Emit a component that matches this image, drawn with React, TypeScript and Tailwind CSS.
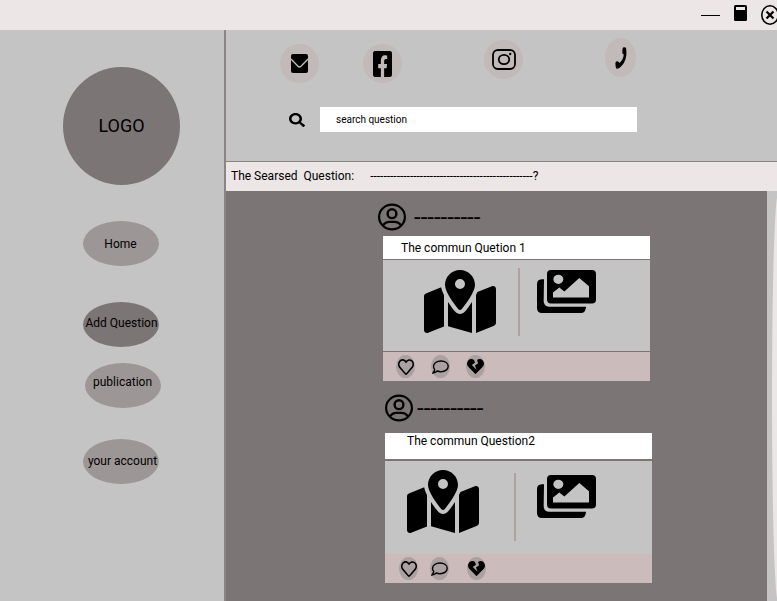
import type { ReactNode } from "react";
import { FaHeartBroken, FaRegHeart, FaSearch, FaFacebookSquare } from "react-icons/fa";
import { FaMapLocationDot } from "react-icons/fa6";

function MailIcon() {
  return (
    <svg viewBox="0 0 17 19" className="h-[19px] w-[17px]" aria-hidden="true">
      <rect width="17" height="19" rx="2" fill="#000" />
      <path d="M0 5 L7 12.2 Q8.500 13.600 10 12.200 L17 5" fill="none" stroke="#c2b9b9" strokeWidth="1.400" />
    </svg>
  );
}

function InstagramIcon() {
  return (
    <svg viewBox="0 0 24 21" className="h-[21px] w-6" fill="none" stroke="#000" aria-hidden="true">
      <rect x="1" y="1" width="22" height="19" rx="5" strokeWidth="1.800" />
      <ellipse cx="12" cy="10.500" rx="5.200" ry="4.600" strokeWidth="1.800" />
      <circle cx="18.200" cy="5" r="1.200" fill="#000" stroke="none" />
    </svg>
  );
}

function PhoneIcon() {
  return (
    <svg viewBox="0 0 12 22" className="h-[22px] w-3" aria-hidden="true">
      <path
        d="M8 .5 Q9.500 -.2 11 .8 C12.200 8 11 15 5.500 20 Q3.500 22 1.500 21.700 Q.2 20 .5 15.500 Q1.500 13.500 3.200 14.600 L4.500 16 C7 14 8.500 11 8.800 7.600 L7.500 6.800 Q7 3 8 .5 Z"
        fill="#000"
      />
    </svg>
  );
}

function AvatarIcon() {
  return (
    <svg viewBox="0 0 28 28" className="size-7 shrink-0" fill="none" stroke="#000" strokeWidth="2.200" aria-hidden="true">
      <ellipse cx="14" cy="14" rx="12.900" ry="12.300" />
      <circle cx="14" cy="10.700" r="4.400" strokeWidth="2.400" />
      <path d="M5 22.500 Q7.500 18.800 11 18.800 H17 Q20.500 18.800 23 22.500" />
    </svg>
  );
}

function ImagesIcon({ className }: { className: string }) {
  return (
    <svg viewBox="0 0 177 130" preserveAspectRatio="none" className={className} aria-hidden="true">
      <path d="M21 28 H14 Q0 29 0 42 V115 Q0 130 15 130 H134 Q146 129 147 111 H36 Q20 110 20 94 Z" fill="#000" />
      <path
        fillRule="evenodd"
        fill="#000"
        d="M42 0 H165 Q177 0 177 12 V89 Q177 101 165 101 H42 Q30 101 30 89 V12 Q30 0 42 0 Z M64 14 A15 14 0 1 0 64 42 A15 14 0 1 0 64 14 Z M48 83 H156 V49 L127 24 L82 65 L67 53 L48 68 Z"
      />
    </svg>
  );
}

function CommentIcon() {
  return (
    <svg viewBox="0 0 17 14" className="h-3.5 w-[17px]" fill="none" stroke="#000" strokeWidth="1.400" aria-hidden="true">
      <path d="M9 1 C13.200 1 16.200 3.200 16.200 6.300 C16.200 9.400 13.200 11.700 9 11.700 Q7 11.700 5.300 11 Q3.500 12.900 .9 13 Q2.500 11.300 2.700 9.400 Q1.500 8.200 1.500 6.300 C1.500 3.200 4.800 1 9 1 Z" />
    </svg>
  );
}

const contacts: { name: string; icon: ReactNode; shape: string }[] = [
  { name: "Email", icon: <MailIcon />, shape: "mt-1.5 w-[39px]" },
  {
    name: "Facebook",
    icon: <FaFacebookSquare viewBox="0 32 448 448" preserveAspectRatio="none" className="h-[26px] w-[19px]" />,
    shape: "mt-1.5 ml-11 w-[39px]",
  },
  { name: "Instagram", icon: <InstagramIcon />, shape: "mt-0.5 ml-[82px] w-[39px]" },
  { name: "Phone", icon: <PhoneIcon />, shape: "ml-[82px] w-[31px]" },
];

const links = [
  { label: "Home", look: "mt-9 bg-[#9d9696]" },
  { label: "Add Question", look: "mt-9 bg-[#7c7575] pb-1 pl-0.5" },
  { label: "publication", look: "mt-4 ml-0.5 bg-[#9d9696] pb-2" },
  { label: "your account", look: "mt-[31px] bg-[#9d9696] pb-0.5 pl-1" },
];

function Reaction({ label, children }: { label: string; children: ReactNode }) {
  return (
    <button type="button" aria-label={label} className="flex h-[23px] w-[19px] items-center justify-center rounded-[50%] bg-[#aba1a1]">
      <span className="flex shrink-0">{children}</span>
    </button>
  );
}

type PostProps = {
  title: string;
  place: string;
  author: string;
  head: string;
  body: string;
  pin: string;
  divider: string;
  images: string;
  foot: string;
  lastReaction: string;
};

function Post(p: PostProps) {
  return (
    <article className={p.place}>
      <div className={p.author}>
        <AvatarIcon />
        <span className="text-2xl leading-6">----------</span>
      </div>
      <div className="w-[267px]">
        <h2 className={p.head}>{p.title}</h2>
        <div className={p.body}>
          <FaMapLocationDot className={p.pin} />
          <div className={p.divider} />
          <ImagesIcon className={p.images} />
        </div>
        <div className={p.foot}>
          <Reaction label="Like">
            <FaRegHeart preserveAspectRatio="none" className="h-[18px] w-4" />
          </Reaction>
          <Reaction label="Comment">
            <CommentIcon />
          </Reaction>
          <div className={p.lastReaction}>
            <Reaction label="Dislike">
              <FaHeartBroken preserveAspectRatio="none" className="h-[17px] w-[17px]" />
            </Reaction>
          </div>
        </div>
      </div>
    </article>
  );
}

export default function App() {
  return (
    <div className="flex min-h-screen flex-col overflow-hidden bg-[#c4c4c4] font-[Roboto,sans-serif] text-xs text-black">
      <header className="flex h-[30px] shrink-0 justify-end bg-[#ece6e6]">
        <button type="button" aria-label="Minimize" className="flex w-[19px] items-center">
          <span className="h-px w-full bg-black" />
        </button>
        <button type="button" aria-label="Maximize" className="ml-3.5 flex w-[13px] items-start pt-[5px]">
          <svg viewBox="0 0 13 16" className="h-4 w-[13px]" aria-hidden="true">
            <rect width="13" height="16" rx="1.500" fill="#000" />
            <rect x="2" y="2" width="9" height="3" fill="#ece6e6" />
          </svg>
        </button>
        <button type="button" aria-label="Close" className="-mr-0.5 ml-3.5 flex w-[18px] items-start pt-[5px]">
          <svg viewBox="0 0 18 20" className="h-5 w-[18px]" fill="none" stroke="#000" aria-hidden="true">
            <ellipse cx="9" cy="10" rx="8.200" ry="9.200" strokeWidth="1.600" />
            <path d="M5.500 6.500 L12.500 13.500 M12.500 6.500 L5.500 13.500" strokeWidth="2.200" />
          </svg>
        </button>
      </header>

      <div className="flex grow">
        <aside className="flex w-[226px] shrink-0 flex-col items-center border-r-2 border-[#8b8484] pt-[37px] pl-[19px]">
          <div className="flex h-[118px] w-[117px] items-center justify-center rounded-[50%] bg-[#7c7575] text-lg">LOGO</div>
          <nav className="flex flex-col">
            {links.map((l) => (
              <a
                key={l.label}
                href="#"
                className={`${l.look} flex h-[45px] w-[76px] items-center justify-center rounded-[50%] whitespace-nowrap`}
              >
                {l.label}
              </a>
            ))}
          </nav>
        </aside>

        <main className="flex min-w-0 grow flex-col">
          <section className="h-[132px] shrink-0 border-b border-[#8b8484] pt-2 pl-[54px]">
            <div className="flex h-[69px] items-start">
              {contacts.map((c) => (
                <a
                  key={c.name}
                  href="#"
                  aria-label={c.name}
                  className={`${c.shape} flex h-[39px] items-center justify-center rounded-[50%] bg-[#c2b9b9]`}
                >
                  {c.icon}
                </a>
              ))}
            </div>
            <form className="flex items-center pl-[9px]">
              <label htmlFor="search" aria-label="Search">
                <FaSearch preserveAspectRatio="none" className="h-3.5 w-4" />
              </label>
              <input
                id="search"
                type="text"
                defaultValue="search question"
                className="ml-[15px] h-[25px] w-[317px] bg-white px-4 text-[10px] outline-none"
              />
            </form>
          </section>

          <div className="flex h-[29px] shrink-0 items-center gap-4 bg-[#ece6e6] pb-0.5 pl-[5px]">
            <h1 className="whitespace-pre">The Searsed  Question:</h1>
            <span>-------------------------------------------------?</span>
          </div>

          <div className="flex grow">
            <section className="min-w-0 grow bg-[#7c7575] pb-4">
              <Post
                title="The commun Quetion 1"
                place="pt-3 pl-[157px]"
                author="mb-[5px] -ml-[5px] flex items-center gap-2"
                head="h-6 border-b border-[#7c7575] bg-white pl-[18px] leading-6"
                body="flex h-[92px] items-start border-b border-[#7c7575] bg-[#c4c4c4] pt-2 pl-[41px]"
                pin="mt-0.5 h-16 w-[72px]"
                divider="ml-[22px] h-[68px] w-0.5 bg-[#b0a0a0]"
                images="mt-0.5 ml-[17px] h-[43px] w-[59px]"
                foot="flex h-[29px] items-center gap-4 bg-[#cbbbbb] pl-[13px]"
                lastReaction=""
              />
              <Post
                title="The commun Question2"
                place="pt-[13px] pl-[159px]"
                author="mb-[11px] flex items-center gap-1"
                head="mb-0.5 h-[26px] bg-white pl-[22px] leading-4"
                body="flex h-[93px] items-start bg-[#c4c4c4] pt-[9px] pl-[22px]"
                pin="h-16 w-[72px]"
                divider="mt-[3px] ml-[35px] h-[68px] w-0.5 bg-[#b0a0a0]"
                images="mt-[5px] ml-[21px] h-[43px] w-[59px]"
                foot="flex h-[29px] items-center gap-3 bg-[#cbbbbb] pl-[14px]"
                lastReaction="ml-1.5"
              />
            </section>
            <div className="flex w-2.5 shrink-0 overflow-hidden bg-[#c4c4c4] pt-1 pl-[5px]">
              <div className="w-3 shrink-0 rounded-[50%] bg-[#ece6e6]" />
            </div>
          </div>
        </main>
      </div>
    </div>
  );
}
